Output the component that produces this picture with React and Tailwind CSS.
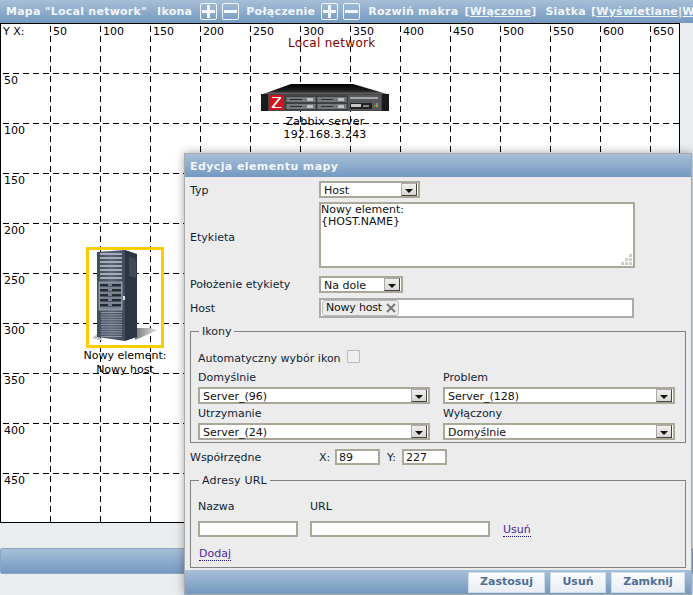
function Arrow() {
  return (
    <span className="flex items-end justify-center w-[16px] h-[13px] mr-px bg-gradient-to-b from-[#f0efec] to-[#d8d7d2] border border-t-[#aaa] border-l-[#aaa] border-r-[#444] border-b-[#444] pb-[2px] shrink-0">
      <svg width="8" height="4" viewBox="0 0 8 4"><path d="M0 0h8L4 4z" fill="#111" /></svg>
    </span>
  );
}

function Sel({ value, className }) {
  return (
    <div className={`flex items-center justify-between h-[17px] bg-white border-2 border-[#aca899] ${className}`}>
      <span className="pl-[3px] pt-px text-[11px] leading-none text-[#111]">{value}</span>
      <Arrow />
    </div>
  );
}

function Box({ value, className }) {
  return (
    <div className={`flex items-center h-[16px] bg-white border-2 border-[#aca899] pl-[2px] text-[11px] leading-none text-[#111] ${className}`}>{value}</div>
  );
}

function PM({ minus }) {
  return (
    <span className="inline-flex items-center justify-center w-[17px] h-[17px] border border-[#f0f4f8] rounded-[2px] shrink-0">
      <svg width="13" height="13" viewBox="0 0 13 13">
        <rect x="0" y="5" width="13" height="3" fill="#f4f7fa" />
        {!minus && <rect x="5" y="0" width="3" height="13" fill="#f4f7fa" />}
      </svg>
    </span>
  );
}

function Grid() {
  const xs = [50, 100, 150, 200, 250, 300, 350, 400, 450, 500, 550, 600, 650];
  const ys = [49, 99, 149, 199, 249, 299, 349, 399, 449];
  return (
    <svg className="absolute left-0 top-0" width="678" height="498">
      {xs.map((x) => (
        <line key={x} x1={x - 0.5} x2={x - 0.5} y1="0" y2="498" stroke="#000" strokeDasharray="6 4" strokeDashoffset="-2" />
      ))}
      {ys.map((y) => (
        <line key={y} x1="0" x2="678" y1={y + 0.5} y2={y + 0.5} stroke="#000" strokeDasharray="6 4" strokeDashoffset="-2" />
      ))}
    </svg>
  );
}

function RackServer() {
  return (
    <svg width="128" height="28" viewBox="0 0 128 28" className="block">
      <defs>
        <linearGradient id="rtop" x1="0" y1="0" x2="0" y2="1">
          <stop offset="0" stopColor="#000" />
          <stop offset="0.7" stopColor="#222" />
          <stop offset="1" stopColor="#6a6a6a" />
        </linearGradient>
      </defs>
      <path d="M30 0H92L126 10H2z" fill="url(#rtop)" />
      <rect x="0" y="10" width="128" height="17" fill="#44464a" />
      <rect x="0" y="10" width="7" height="17" fill="#1a1a1a" />
      <rect x="121" y="10" width="7" height="17" fill="#1a1a1a" />
      <rect x="8" y="11" width="15" height="15" fill="#d5121c" />
      <path d="M11 13h9v1.2L13 23h7.4v1H10.6v-1.2L17.8 14H11z" fill="#fff" />
      {[0, 1].map((r) => [0, 1].map((c) => (
        <g key={`${r}${c}`}>
          <rect x={25 + c * 31} y={12.5 + r * 7} width="30" height="6" fill="#75797d" stroke="#2a2a2a" strokeWidth="0.6" />
          <rect x={29 + c * 31} y={15 + r * 7} width="12" height="1" fill="#2e2e2e" />
          <rect x={46 + c * 31} y={14 + r * 7} width="6" height="3" fill="#c0c0c0" />
        </g>
      )))}
      <rect x="87" y="11" width="33" height="15" fill="#55595c" />
      <rect x="89" y="13" width="28" height="2" fill="#a8a8a8" />
      <rect x="89" y="19" width="22" height="6" fill="#222" />
      <rect x="90" y="20" width="10" height="3" fill="#c8c8c8" />
      <rect x="102" y="21" width="6" height="2" fill="#888" />
      <rect x="113" y="19" width="2" height="2" fill="#e03020" />
      <rect x="115" y="19" width="2" height="2" fill="#30a0d0" />
      <rect x="113" y="21" width="2" height="2" fill="#30a050" />
      <rect x="115" y="21" width="2" height="2" fill="#d09020" />
    </svg>
  );
}

function Tower() {
  const rows = (a, b, step) => {
    const out = [];
    for (let y = a; y < b; y += step) out.push(y);
    return out;
  };
  return (
    <svg width="72" height="95" viewBox="0 0 72 95" className="block">
      <defs>
        <linearGradient id="tfront" x1="0" y1="0" x2="1" y2="0">
          <stop offset="0" stopColor="#3f4a5c" />
          <stop offset="0.5" stopColor="#566174" />
          <stop offset="1" stopColor="#3f4a5c" />
        </linearGradient>
        <linearGradient id="tshadow" x1="0" y1="0" x2="1" y2="0">
          <stop offset="0" stopColor="#777" />
          <stop offset="1" stopColor="#e8e8e8" />
        </linearGradient>
      </defs>
      <path d="M46 90L69 80 60 78 46 78z" fill="url(#tshadow)" />
      <path d="M3 88L8 84 14 91z" fill="#c4c4c4" />
      <path d="M8 2L36 0V91L8 87z" fill="url(#tfront)" />
      <path d="M36 0L48 4V87L36 91z" fill="#2c3543" />
      <path d="M40 7L47 9V28L40 26z" fill="#3f4957" />
      {rows(3, 31, 4).map((y) => (
        <rect key={y} x="11" y={y} width="22" height="2" fill="#a6acb6" />
      ))}
      <rect x="10" y="32" width="23" height="28" fill="#7b8490" stroke="#b0b6be" strokeWidth="0.7" />
      {rows(34, 59, 5).map((y) => (
        <g key={y}>
          <rect x="11" y={y} width="21" height="2.5" fill="#222a36" />
          <rect x="19" y={y + 0.5} width="4" height="1" fill="#d0d4da" />
        </g>
      ))}
      {rows(62, 87, 2.4).map((y) => (
        <rect key={y} x="12" y={y} width="21" height="1" fill="#8f96a0" />
      ))}
      <rect x="34" y="46" width="2" height="4" fill="#dde0e4" />
    </svg>
  );
}

function MapLabel({ x, y, children }) {
  return (
    <span className="absolute text-[11px] leading-none text-black whitespace-nowrap" style={{ left: x, top: y }}>{children}</span>
  );
}

export default function App() {
  const xs = [50, 100, 150, 200, 250, 300, 350, 400, 450, 500, 550, 600, 650];
  const ys = [50, 100, 150, 200, 250, 300, 350, 400, 450];
  return (
    <div className="relative w-[693px] h-[595px] overflow-hidden bg-[#e9edf0] font-[DejaVu_Sans,sans-serif]">
      {/* top bar */}
      <div className="flex items-center h-[23px] pl-[6px] whitespace-nowrap overflow-hidden text-[11px] font-bold tracking-[0.25px] text-[#f2f5f8] bg-gradient-to-b from-[#a7bfd7] to-[#7499c0]">
        <span className="pt-px shrink-0">Mapa "Local network"</span>
        <span className="pt-px shrink-0 ml-[10px] mr-[8px]">Ikona</span>
        <PM />
        <span className="w-[5px] shrink-0" />
        <PM minus />
        <span className="pt-px shrink-0 ml-[7px] mr-[6px]">Połączenie</span>
        <PM />
        <span className="w-[5px] shrink-0" />
        <PM minus />
        <span className="pt-px shrink-0 ml-[8px]">Rozwiń makra</span>
        <span className="pt-px shrink-0 ml-[6px]">[<span className="underline">Włączone</span>]</span>
        <span className="pt-px shrink-0 ml-[9px]">Siatka</span>
        <span className="pt-px shrink-0 ml-[5px]">[<span className="underline">Wyświetlane</span>|<span className="underline">Wyłączone</span>]</span>
      </div>

      {/* map */}
      <div className="relative w-[680px] h-[500px] bg-white border border-black overflow-hidden">
        <Grid />
        <MapLabel x={2} y={2}>Y X:</MapLabel>
        {xs.map((x) => <MapLabel key={x} x={x + 2} y={2}>{x}</MapLabel>)}
        {ys.map((y) => <MapLabel key={y} x={3} y={y + 1}>{y}</MapLabel>)}
        <span className="absolute left-[287px] top-[13px] text-[12px] leading-none tracking-[0.3px] text-[#800000]">Local network</span>
        <div className="absolute left-[260px] top-[60px]"><RackServer /></div>
        <div className="absolute left-[260px] top-[91px] w-[128px] text-center text-[11px] leading-[13px] tracking-[0.2px] text-black">
          <div>Zabbix server</div>
          <div>192.168.3.243</div>
        </div>
        <div className="absolute left-[85px] top-[223px] w-[78px] h-[101px] border-[3px] border-[#fc0] flex items-center justify-center">
          <Tower />
        </div>
        <div className="absolute left-[60px] top-[325px] w-[128px] text-center text-[11px] leading-[14px] text-black">
          <div>Nowy element:</div>
          <div>Nowy host</div>
        </div>
      </div>

      {/* bottom bar */}
      <div className="mt-[25px] h-[26px] border border-[#8aa6c4] rounded-l-[2px] bg-gradient-to-b from-[#a7bfd7] to-[#7499c0]" />

      {/* dialog */}
      <div className="absolute left-[184px] top-[153px] w-[508px] h-[442px] flex flex-col bg-[#ececec] border border-[#aaa] shadow-[0_0_9px_rgba(0,0,0,0.35)] text-[11px] leading-[16px] text-[#0f1e36]">
        <div className="flex items-center h-[23px] shrink-0 pl-[5px] pt-[3px] font-bold text-[11px] tracking-[0.4px] text-[#f2f5f8] bg-gradient-to-b from-[#a7bfd7] to-[#7499c0]">Edycja elementu mapy</div>

        <div className="flex-1 pl-[5px]">
          <div className="grid grid-cols-[129px_1fr] items-center mt-[4px]">
            <span className="h-[16px] pt-px">Typ</span>
            <Sel value="Host" className="w-[101px]" />
          </div>
          <div className="grid grid-cols-[129px_1fr] items-center mt-[4px]">
            <span className="pt-[5px]">Etykieta</span>
            <div className="relative w-[316px] h-[66px] bg-white border-2 border-[#aca899] text-[11px] leading-[12px] text-[#111]">
              <div>Nowy element:</div>
              <div>{"{HOST.NAME}"}</div>
              <svg className="absolute right-0 bottom-0" width="13" height="13" viewBox="0 0 13 13">
                {[[9, 1], [5, 5], [9, 5], [1, 9], [5, 9], [9, 9]].map(([x, y]) => (
                  <rect key={`${x}-${y}`} x={x} y={y} width="3" height="3" fill="#ccc" />
                ))}
              </svg>
            </div>
          </div>
          <div className="grid grid-cols-[129px_1fr] items-center mt-[8px]">
            <span>Położenie etykiety</span>
            <Sel value="Na dole" className="w-[84px]" />
          </div>
          <div className="grid grid-cols-[129px_1fr] items-center mt-[5px]">
            <span className="h-[16px] pt-px">Host</span>
            <div className="flex items-center w-[315px] h-[20px] bg-white border-2 border-[#aaa] pl-px">
              <span className="flex items-center gap-[4px] h-[16px] pl-[3px] pr-[2px] bg-[#ececec] border border-[#bbb] rounded-[3px] text-[11px] tracking-[-0.2px] text-[#111]">
                Nowy host
                <svg width="10" height="10" viewBox="0 0 10 10"><path d="M1 1l8 8M9 1L1 9" stroke="#777" strokeWidth="2" /></svg>
              </span>
            </div>
          </div>

          <fieldset className="mt-[7px] w-[496px] h-[118px] border border-[#808080] px-[7px]">
            <legend className="ml-[1px] px-[3px] leading-[13px]">Ikony</legend>
            <div className="flex items-center mt-[14px] h-[14px]">
              <span>Automatyczny wybór ikon</span>
              <span className="ml-[6px] mb-[5px] w-[13px] h-[13px] bg-[#efefef] border border-[#bbb] rounded-[1px]" />
            </div>
            <div className="grid grid-cols-[232px_232px] gap-x-[13px] mt-[5px]">
              <div>
                <div className="h-[16px] leading-[14px]">Domyślnie</div>
                <Sel value="Server_(96)" className="w-[232px]" />
              </div>
              <div>
                <div className="h-[16px] leading-[14px]">Problem</div>
                <Sel value="Server_(128)" className="w-[232px]" />
              </div>
              <div className="mt-[3px]">
                <div className="h-[16px] leading-[14px]">Utrzymanie</div>
                <Sel value="Server_(24)" className="w-[232px]" />
              </div>
              <div className="mt-[3px]">
                <div className="h-[16px] leading-[14px]">Wyłączony</div>
                <Sel value="Domyślnie" className="w-[232px]" />
              </div>
            </div>
          </fieldset>

          <div className="grid grid-cols-[129px_1fr] items-center mt-[6px]">
            <span className="h-[16px] pt-px">Współrzędne</span>
            <div className="flex items-center">
              <span className="w-[16px] h-[16px] pt-px">X:</span>
              <Box value="89" className="w-[45px]" />
              <span className="ml-[7px] w-[15px] h-[16px] pt-px">Y:</span>
              <Box value="227" className="w-[45px]" />
            </div>
          </div>

          <fieldset className="mt-[9px] w-[496px] h-[94px] border border-[#808080] px-[7px]">
            <legend className="ml-[1px] px-[3px] leading-[13px] tracking-[0.2px]">Adresy URL</legend>
            <div className="grid grid-cols-[112px_193px_1fr] mt-[13px] leading-[14px]">
              <span>Nazwa</span>
              <span>URL</span>
              <span />
            </div>
            <div className="grid grid-cols-[112px_193px_1fr] mt-[7px] items-center">
              <Box value="" className="w-[100px]" />
              <Box value="" className="w-[180px]" />
              <span className="mt-[3px] w-fit text-[#4a2b9c] border-b border-dotted border-[#1a1a8c] leading-[12px]">Usuń</span>
            </div>
            <div className="mt-[11px] ml-px w-fit text-[#4a2b9c] border-b border-dotted border-[#1a1a8c] leading-[12px]">Dodaj</div>
          </fieldset>
        </div>

        <div className="flex items-center justify-end gap-[5px] h-[24px] shrink-0 pr-[6px] bg-gradient-to-b from-[#a7bfd7] to-[#7499c0]">
          {[["Zastosuj", "w-[77px]"], ["Usuń", "w-[56px]"], ["Zamknij", "w-[74px]"]].map(([t, w]) => (
            <button key={t} className={`h-[21px] ${w} bg-gradient-to-b from-[#fbfcfe] to-[#e8eef5] border border-[#cfdbe8] text-[11px] font-bold text-[#4f6f93]`}>{t}</button>
          ))}
        </div>
      </div>
    </div>
  );
}
